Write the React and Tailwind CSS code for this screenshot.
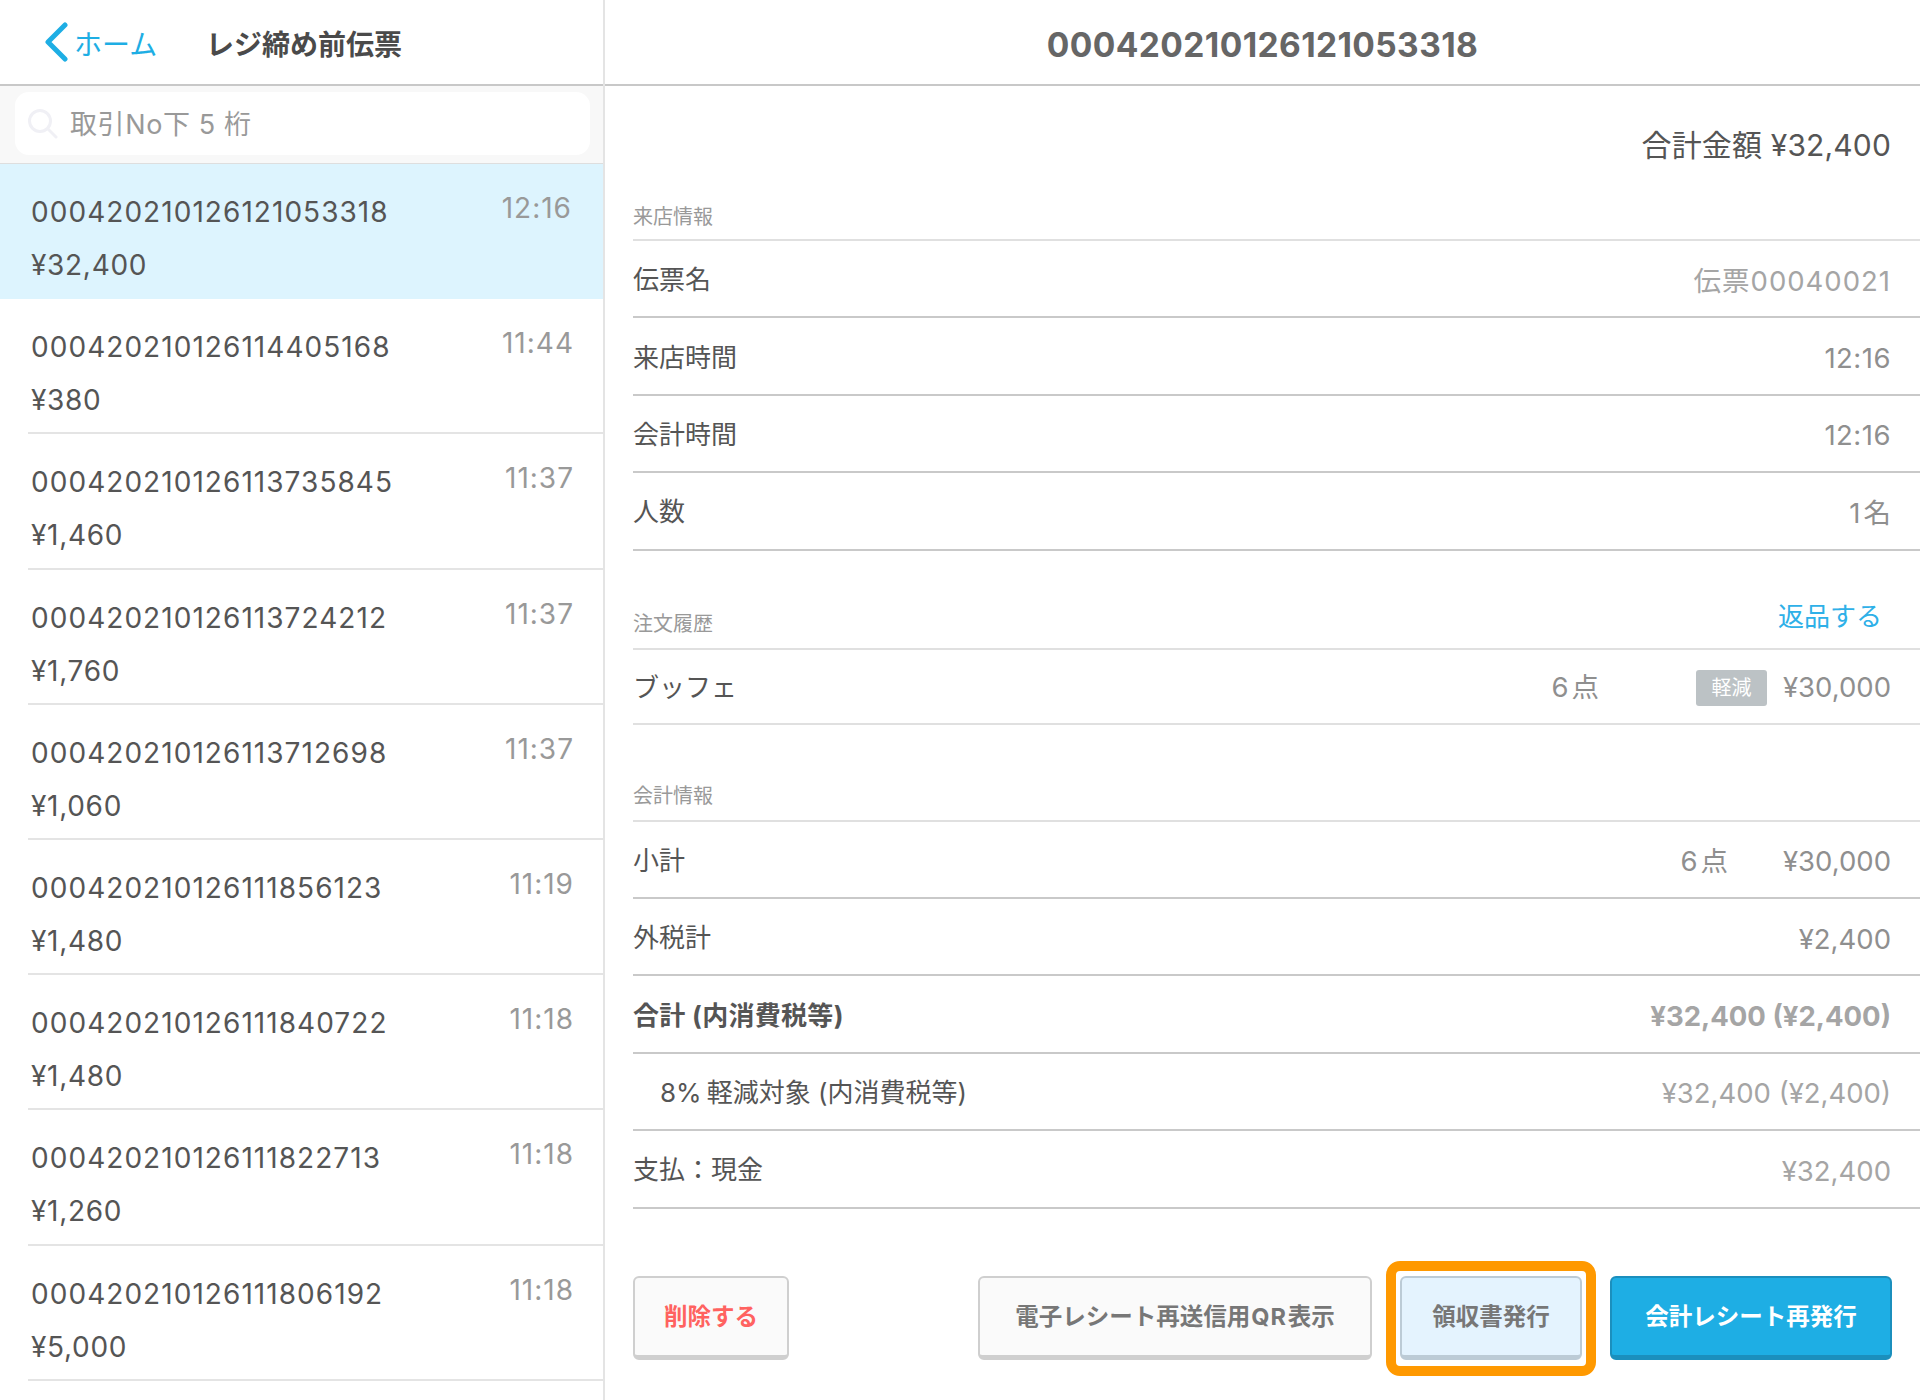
import React from 'react';

const slips = [
  { no: '000420210126121053318', price: '¥32,400', time: '12:16', active: true },
  { no: '000420210126114405168', price: '¥380', time: '11:44' },
  { no: '000420210126113735845', price: '¥1,460', time: '11:37' },
  { no: '000420210126113724212', price: '¥1,760', time: '11:37' },
  { no: '000420210126113712698', price: '¥1,060', time: '11:37' },
  { no: '000420210126111856123', price: '¥1,480', time: '11:19' },
  { no: '000420210126111840722', price: '¥1,480', time: '11:18' },
  { no: '000420210126111822713', price: '¥1,260', time: '11:18' },
  { no: '000420210126111806192', price: '¥5,000', time: '11:18' },
];

const SlipRow = ({ slip }) => (
  <div className={`h-[135.2px] shrink-0 relative ${slip.active ? 'bg-[#ddf4fe]' : ''}`}>
    <div className={`h-full ml-[28px] pl-[3px] flex flex-col ${slip.active ? 'pr-[31px]' : 'pr-[29px] border-b-2 border-[#e4e4e4]'}`}>
      <div className="flex justify-between mt-[27px] h-[42px]">
        <span className="text-[28px] tracking-[1.05px] leading-[42px] text-[#555]">{slip.no}</span>
        <span className="text-[28px] tracking-[1px] leading-[34px] text-[#999]">{slip.time}</span>
      </div>
      <div className="text-[28px] tracking-[0.7px] leading-[42px] mt-[11px] text-[#555]">{slip.price}</div>
    </div>
  </div>
);

const DetailRow = ({ label, value, bold, indent, tone = 'text-[#8f8f8f]', children }) => (
  <div className="h-[77.4px] ml-[28px] pr-[29px] flex items-center justify-between border-b-2 border-[#c9c9c9]">
    <span className={`pt-[2px] text-[26px] text-[#555] ${bold ? 'font-bold tracking-[0.3px]' : ''} ${indent ? 'pl-[27px]' : ''}`}>{label}</span>
    <div className="flex items-center pt-[5px]">
      {children}
      <span className={`text-[27.5px] ${bold ? 'font-bold' : ''} ${tone}`}>{value}</span>
    </div>
  </div>
);

const SectionHead = ({ title, className, children }) => (
  <div className={`ml-[28px] flex items-end justify-between border-b-2 border-[#e0e0e0] ${className}`}>
    <span className="text-[20px] leading-[24px] text-[#999]">{title}</span>
    {children}
  </div>
);

const Button = ({ className, children }) => (
  <button className={`h-[84px] pt-[2px] rounded-[6px] border-2 border-b-[5px] text-[23.5px] font-bold flex items-center justify-center ${className}`}>
    {children}
  </button>
);

export default function App() {
  return (
    <div className="w-[1920px] h-[1400px] flex overflow-hidden bg-white font-['Inter','Noto_Sans_CJK_JP',sans-serif]">
      {/* left list */}
      <div className="w-[605px] shrink-0 border-r-2 border-[#e4e4e4] flex flex-col">
        <div className="h-[86px] shrink-0 border-b-2 border-[#c8c8c8] flex items-center pl-[44px]">
          <svg width="24" height="40" viewBox="0 0 24 40" fill="none" stroke="#1eaee4" strokeWidth="5" strokeLinecap="round" strokeLinejoin="round">
            <path d="M21 3 L4 20 L21 37" />
          </svg>
          <span className="pt-[6px] ml-[6px] w-[132px] text-[28px] text-[#1eaee4]">ホーム</span>
          <span className="pt-[5px] text-[28px] font-semibold text-[#4a4a4a]">レジ締め前伝票</span>
        </div>
        <div className="h-[78px] shrink-0 bg-[#f8f8f8] border-b border-[#dedede] px-[15px] pt-[6px]">
          <div className="h-[63px] w-[575px] rounded-[14px] bg-white flex items-center pl-[13px]">
            <svg width="30" height="30" viewBox="0 0 30 30" fill="none" stroke="#f0f0f5" strokeWidth="3" strokeLinecap="round">
              <circle cx="12" cy="12" r="10.5" />
              <path d="M20 20 L28 28" />
            </svg>
            <span className="pt-[3px] ml-[12px] text-[27px] tracking-[0.6px] text-[#999]">取引No下 5 桁</span>
          </div>
        </div>
        {slips.map((slip) => (
          <SlipRow key={slip.no} slip={slip} />
        ))}
      </div>

      {/* right detail */}
      <div className="flex-1 flex flex-col min-w-0">
        <div className="h-[86px] shrink-0 border-b-2 border-[#c8c8c8] flex items-center justify-center">
          <span className="pt-[6px] text-[33.5px] font-bold text-[#666] tracking-[0.4px]">000420210126121053318</span>
        </div>

        <div className="h-[100px] shrink-0 pt-[38px] pr-[29px] text-right text-[30px] tracking-[0.15px] leading-[42px] text-[#555]">
          合計金額 ¥32,400
        </div>

        <SectionHead title="来店情報" className="h-[55px] pb-[10px]" />
        <DetailRow label="伝票名" value="伝票00040021" tone="text-[#a5a5a5] tracking-[1px]" />
        <DetailRow label="来店時間" value="12:16" tone="text-[#8f8f8f] tracking-[0.5px]" />
        <DetailRow label="会計時間" value="12:16" tone="text-[#8f8f8f] tracking-[0.5px]" />
        <DetailRow label="人数" value={<>1<span className="ml-[3px]">名</span></>} />

        <SectionHead title="注文履歴" className="h-[99px] pb-[12px] pr-[38px]">
          <span className="text-[26px] leading-[34px] text-[#2eb0e8] mb-[-1px] relative -top-[3px]">返品する</span>
        </SectionHead>
        <div className="h-[75px] ml-[28px] pr-[29px] flex items-center justify-between border-b-2 border-[#e0e0e0]">
          <span className="pt-[3px] text-[26px] text-[#555]">ブッフェ</span>
          <div className="pt-[3px] flex items-center text-[27.5px] text-[#8f8f8f]">
            <span>6<span className="ml-[3px]">点</span></span>
            <span className="ml-[97px] mr-[16px] w-[71px] h-[36px] rounded-[3px] bg-[#bcc2c5] text-white text-[20px] flex items-center justify-center">軽減</span>
            <span>¥30,000</span>
          </div>
        </div>

        <SectionHead title="会計情報" className="h-[97px] pb-[12px]" />
        <DetailRow label="小計" value="¥30,000">
          <span className="mr-[55px] text-[27.5px] text-[#8f8f8f]">6<span className="ml-[3px]">点</span></span>
        </DetailRow>
        <DetailRow label="外税計" value="¥2,400" />
        <DetailRow label="合計 (内消費税等)" value="¥32,400 (¥2,400)" bold tone="text-[#a5a5a5]" />
        <DetailRow label={<>8%<span className="ml-[5px]">軽減対象 (内消費税等)</span></>} value="¥32,400 (¥2,400)" indent tone="text-[#a5a5a5]" />
        <DetailRow label="支払：現金" value="¥32,400" tone="text-[#a5a5a5]" />

        <div className="mt-[67px] ml-[28px] pr-[28px] flex justify-between">
          <Button className="w-[156px] bg-[#fafafa] border-[#cfcfcf] text-[#ff6260]">削除する</Button>
          <div className="flex gap-[28px]">
            <Button className="w-[394px] bg-[#fafafa] border-[#cfcfcf] text-[#777]">電子レシート再送信用<span className="mx-[1px] tracking-[1px]">QR</span>表示</Button>
            <div className="relative">
              <Button className="w-[182px] bg-[#e4f3fe] border-[#bccbd6] text-[#777]">領収書発行</Button>
              <div className="absolute -left-[14px] -right-[14px] -top-[15px] -bottom-[16px] rounded-[14px] border-[10px] border-[#ff9900]" />
            </div>
            <Button className="w-[282px] bg-[#1eaee4] border-[#1b8fbd] text-white">会計レシート再発行</Button>
          </div>
        </div>
      </div>
    </div>
  );
}
